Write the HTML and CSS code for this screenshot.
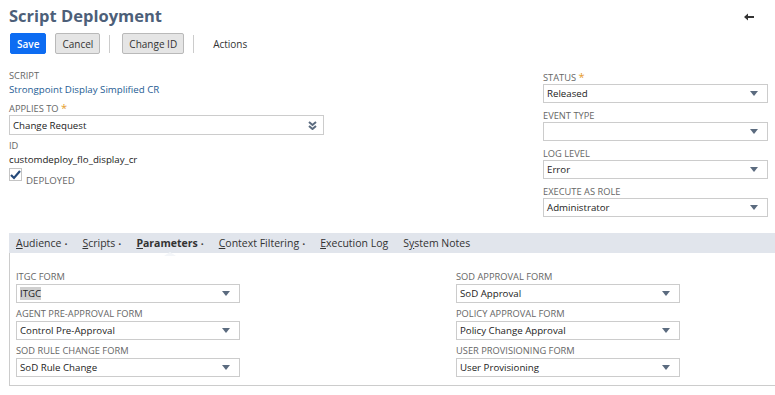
FILE: index.html
```html
<!DOCTYPE html>
<html lang="en">
<head>
    <meta charset="UTF-8">
    <title>Script Deployment</title>
    <link rel="stylesheet" href="styles.css">
</head>
<body>
    <div class="page">
        <div class="title-row">
            <h1>Script Deployment</h1>
            <span class="back-arrow">
                <svg width="10" height="8" viewBox="0 0 10 8"><path d="M0 4 L4 0.5 L4 3 L10 3 L10 5 L4 5 L4 7.5 Z" fill="#333"/></svg>
            </span>
        </div>

        <!-- Toolbar -->
        <div class="toolbar">
            <button class="btn btn-primary">Save</button>
            <button class="btn">Cancel</button>
            <span class="sep"></span>
            <button class="btn">Change ID</button>
            <span class="sep"></span>
            <span class="actions">Actions</span>
        </div>

        <!-- Main fields -->
        <div class="main-fields">
            <div class="col-left">
                <div class="field">
                    <div class="label">SCRIPT</div>
                    <a class="link">Strongpoint Display Simplified CR</a>
                </div>
                <div class="field">
                    <div class="label">APPLIES TO <span class="req">*</span></div>
                    <div class="select select-wide">
                        <span>Change Request</span>
                        <svg class="dbl" width="9" height="9" viewBox="0 0 9 9"><path d="M1 1 L4.5 4 L8 1 M1 5 L4.5 8 L8 5" stroke="#5b6b7f" stroke-width="2" fill="none"/></svg>
                    </div>
                </div>
                <div class="field">
                    <div class="label">ID</div>
                    <div class="value">customdeploy_flo_display_cr</div>
                </div>
                <div class="check-row">
                    <span class="checkbox">
                        <svg width="11" height="10" viewBox="0 0 11 10"><path d="M1 5 L4 8 L10 1" stroke="#24497a" stroke-width="2.2" fill="none"/></svg>
                    </span>
                    <span class="label">DEPLOYED</span>
                </div>
            </div>
            <div class="col-right">
                <div class="field">
                    <div class="label">STATUS <span class="req">*</span></div>
                    <div class="select"><span>Released</span><i class="caret"></i></div>
                </div>
                <div class="field">
                    <div class="label">EVENT TYPE</div>
                    <div class="select"><span></span><i class="caret"></i></div>
                </div>
                <div class="field">
                    <div class="label">LOG LEVEL</div>
                    <div class="select"><span>Error</span><i class="caret"></i></div>
                </div>
                <div class="field">
                    <div class="label">EXECUTE AS ROLE</div>
                    <div class="select"><span>Administrator</span><i class="caret"></i></div>
                </div>
            </div>
        </div>

        <!-- Tabs -->
        <div class="tabs">
            <span class="tab"><u>A</u>udience<b class="dot">•</b></span>
            <span class="tab"><u>S</u>cripts<b class="dot">•</b></span>
            <span class="tab active"><u>P</u>arameters<b class="dot">•</b></span>
            <span class="tab"><u>C</u>ontext Filtering<b class="dot">•</b></span>
            <span class="tab"><u>E</u>xecution Log</span>
            <span class="tab">S<u>y</u>stem Notes</span>
        </div>
        <div class="tab-panel">
            <div class="param-col">
                <div class="field">
                    <div class="label">ITGC FORM</div>
                    <div class="select"><span class="hl">ITGC</span><i class="caret"></i></div>
                </div>
                <div class="field">
                    <div class="label">AGENT PRE-APPROVAL FORM</div>
                    <div class="select"><span>Control Pre-Approval</span><i class="caret"></i></div>
                </div>
                <div class="field">
                    <div class="label">SOD RULE CHANGE FORM</div>
                    <div class="select"><span>SoD Rule Change</span><i class="caret"></i></div>
                </div>
            </div>
            <div class="param-col">
                <div class="field">
                    <div class="label">SOD APPROVAL FORM</div>
                    <div class="select"><span>SoD Approval</span><i class="caret"></i></div>
                </div>
                <div class="field">
                    <div class="label">POLICY APPROVAL FORM</div>
                    <div class="select"><span>Policy Change Approval</span><i class="caret"></i></div>
                </div>
                <div class="field">
                    <div class="label">USER PROVISIONING FORM</div>
                    <div class="select"><span>User Provisioning</span><i class="caret"></i></div>
                </div>
            </div>
        </div>
    </div>
</body>
</html>
```

FILE: styles.css
```css
body {
    margin: 0;
    font-family: "Open Sans", sans-serif;
    background-color: #ffffff;
    color: #222222;
}
.page {
    padding: 4px 0 0 9px;
}
.title-row {
    display: flex;
    justify-content: space-between;
    align-items: center;
    padding-right: 21px;
}
h1 {
    margin: 0;
    font-size: 16.5px;
    font-weight: bold;
    color: #4d5f79;
    line-height: 24px;
}
.back-arrow {
    display: flex;
    padding-top: 2px;
}
.toolbar {
    display: flex;
    align-items: center;
    margin-top: 5px;
    height: 21px;
    padding-left: 1px;
}
.btn {
    font-family: "Open Sans", sans-serif;
    font-size: 10px;
    font-weight: 400;
    height: 21px;
    padding: 0 6px;
    border: 1px solid #b9b9b9;
    border-radius: 2px;
    background: #e5e5e5;
    color: #333333;
    margin-right: 9px;
}
.btn-primary {
    background: #0d6cf2;
    border-color: #0d6cf2;
    color: #ffffff;
    font-weight: 600;
}
.sep {
    width: 1px;
    height: 18px;
    background: #cccccc;
    margin: 0 12px 0 0;
}
.actions {
    font-size: 10px;
    color: #333333;
    margin-left: 7px;
}
.main-fields {
    display: flex;
    margin-top: 16px;
}
.col-left {
    width: 315px;
    flex-shrink: 0;
}
.col-right {
    width: 225px;
    flex-shrink: 0;
    margin-left: 219px;
    margin-top: 1px;
}
.field {
    margin-bottom: 5px;
}
.label {
    font-size: 9.3px;
    color: #666666;
    line-height: 12px;
    margin-bottom: 1px;
}
.col-left .field:nth-child(2) .label {
    margin-top: 2px;
    margin-bottom: 0;
}
.col-right .label {
    margin-bottom: 0;
}
.col-right .field {
    margin-bottom: 7px;
}
.req {
    color: #e59b2a;
    font-size: 11px;
}
.link {
    display: block;
    font-size: 9.7px;
    color: #255b93;
    line-height: 14px;
    margin-top: 1px;
}
.value {
    font-size: 9.7px;
    line-height: 14px;
}
.select {
    display: flex;
    justify-content: space-between;
    align-items: center;
    height: 17px;
    border: 1px solid #cccccc;
    background: #ffffff;
    font-size: 9.7px;
    padding: 0 9px 0 3px;
}
.select-wide {
    padding-right: 6px;
    height: 18px;
}
.caret {
    width: 0;
    height: 0;
    border-left: 4.5px solid transparent;
    border-right: 4.5px solid transparent;
    border-top: 5px solid #5b6b7f;
}
.hl {
    background: #cfcfcf;
}
.check-row {
    display: flex;
    align-items: flex-start;
    gap: 4px;
    margin-top: -4px;
}
.checkbox {
    width: 11px;
    height: 11px;
    border: 1px solid #c4c4c4;
    display: flex;
    align-items: center;
    justify-content: center;
}
.check-row .label {
    margin: 7px 0 0;
    font-size: 9.7px;
}
.tabs {
    display: flex;
    align-items: center;
    background: #e1e5ec;
    height: 20px;
    margin-top: 9px;
    padding-left: 7px;
    font-size: 10.5px;
    color: #333333;
}
.tab {
    margin-right: 15px;
    white-space: nowrap;
}
.tab.active {
    font-weight: bold;
    position: relative;
}
/* little notch under the active tab */
.tab.active::after {
    content: "";
    position: absolute;
    left: 50%;
    bottom: -6px;
    margin-left: -6px;
    border-left: 6px solid transparent;
    border-right: 6px solid transparent;
    border-bottom: 4px solid #f4f6f9;
}
.dot {
    font-weight: normal;
    font-size: 8px;
    margin-left: 3px;
    color: #444444;
}
.tab-panel {
    display: flex;
    border-left: 1px solid #cccccc;
    border-bottom: 1px solid #cccccc;
    padding: 18px 0 8px 6px;
}
.param-col {
    width: 224px;
    flex-shrink: 0;
}
.param-col:first-child {
    margin-right: 216px;
}
.tab-panel .field {
    margin-bottom: 5px;
}
.tab-panel .field:last-child {
    margin-bottom: 0;
}
.tab-panel .label {
    margin-bottom: 1px;
}
```
